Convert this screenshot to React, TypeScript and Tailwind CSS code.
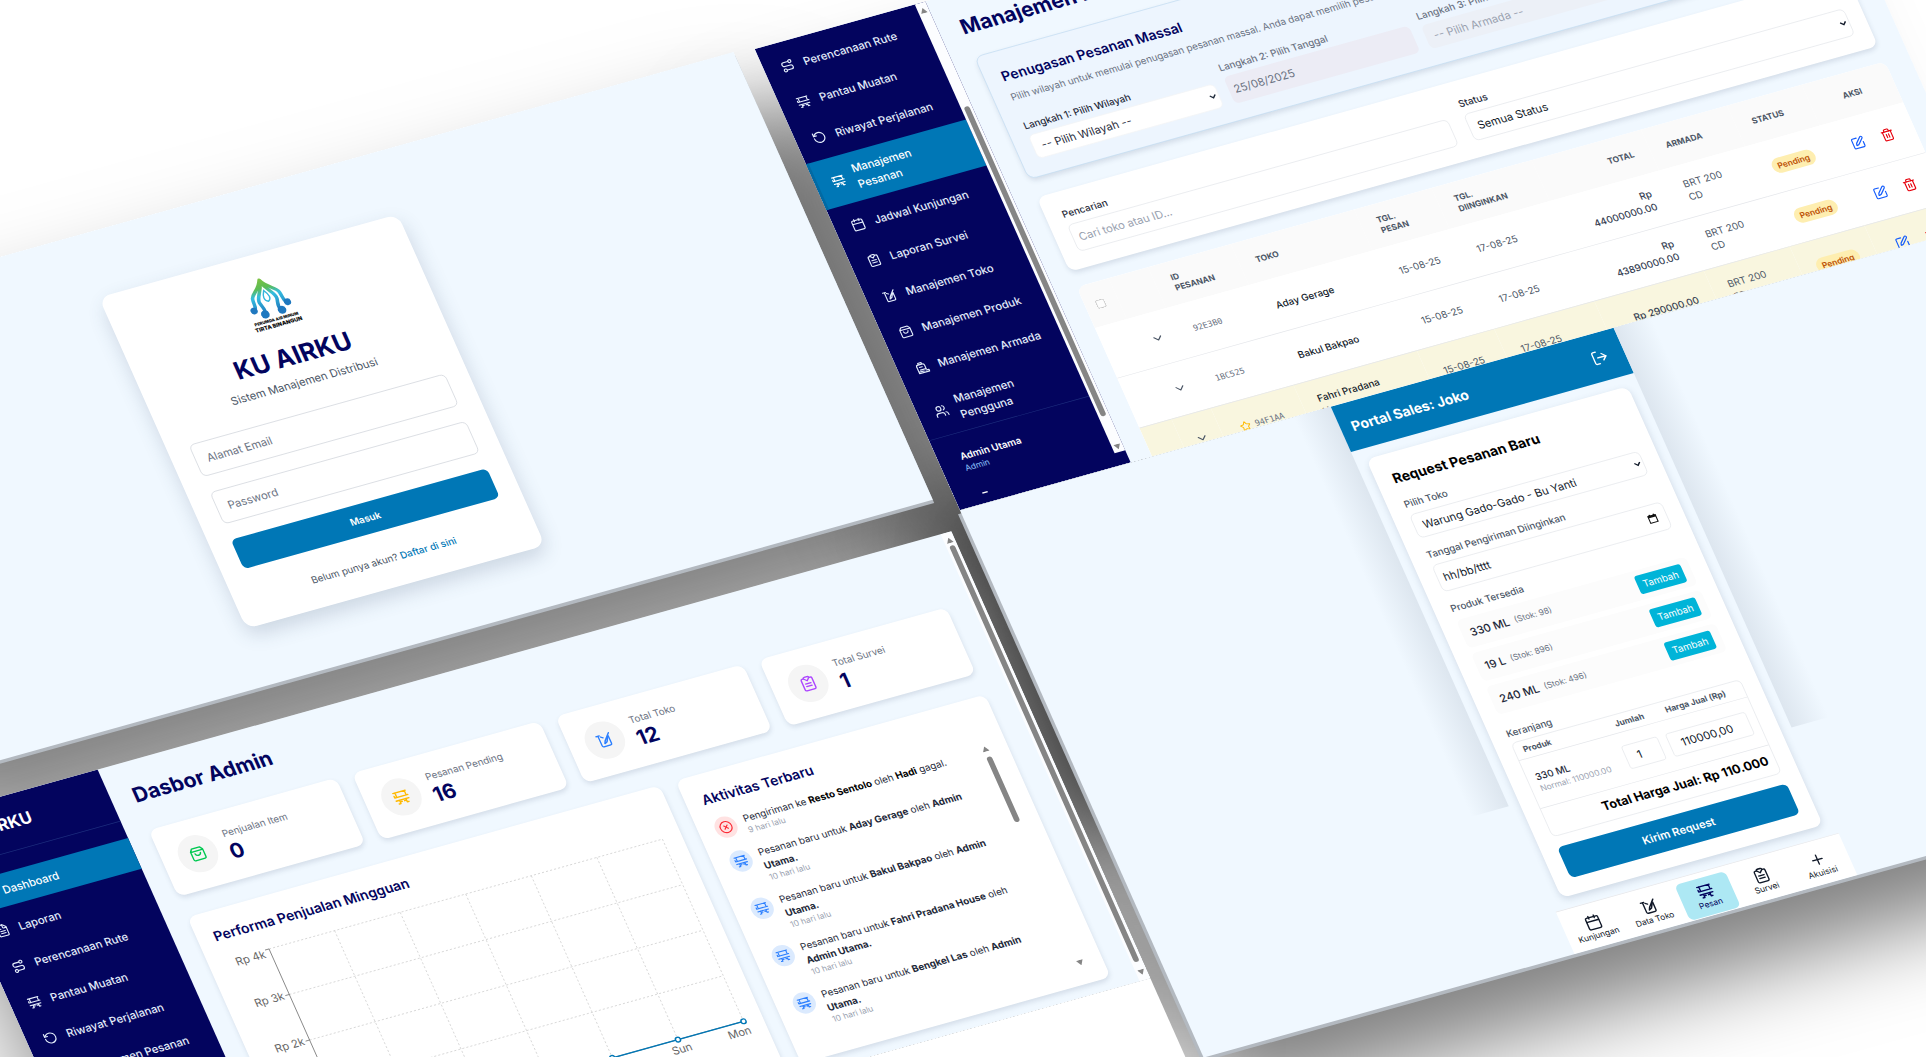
import React from "react";
import {
  Calendar,
  ChevronDown,
  CircleX,
  ClipboardList,
  FileText,
  LayoutDashboard,
  LogOut,
  Plus,
  RotateCcw,
  ShoppingBag,
  SquarePen,
  Star,
  Trash2,
  Users,
} from "lucide-react";

type IconProps = { className?: string };
type IconType = React.ComponentType<IconProps>;

const stroke = {
  viewBox: "0 0 24 24",
  fill: "none",
  stroke: "currentColor",
  strokeWidth: 2,
  strokeLinecap: "round" as const,
  strokeLinejoin: "round" as const,
};

function RouteIcon({ className }: IconProps) {
  return (
    <svg {...stroke} className={className} aria-hidden="true">
      <circle cx="18" cy="5" r="2.6" />
      <circle cx="6" cy="19" r="2.6" />
      <path d="M15 5H7a3.5 3.5 0 0 0 0 7h10a3.5 3.5 0 0 1 0 7H9" />
    </svg>
  );
}

function TruckIcon({ className }: IconProps) {
  return (
    <svg {...stroke} className={className} aria-hidden="true">
      <path d="M2.500 4H21M5.500 4v7M19.500 4v7M2.500 8.500v2.500H22" />
      <path d="M2.500 16h19M7.500 16v5H5M17 16v5h2.500M7.500 18.500h3M14 18.500h3" />
    </svg>
  );
}

function StoreIcon({ className }: IconProps) {
  return (
    <svg {...stroke} className={className} aria-hidden="true">
      <path d="M2 4h5M5 4v15a2 2 0 0 0 2 2h10a2 2 0 0 0 2-2V7" />
      <path d="M21 3l-9 10-2 4 4-2 4-7M8 6l3 2" />
    </svg>
  );
}

function FleetIcon({ className }: IconProps) {
  return (
    <svg {...stroke} className={className} aria-hidden="true">
      <path d="M8 3h6v3H8zM4 8a2 2 0 0 1 2-2h9a3 3 0 0 1 3 3v6" />
      <path d="M4 8v13h18v-3h-5M8 10.500h5M8 15.500h10M4 18.500h9" />
    </svg>
  );
}

function ClipboardIcon({ className }: IconProps) {
  return (
    <svg {...stroke} className={className} aria-hidden="true">
      <path d="M8 4H6a2 2 0 0 0-2 2v14a2 2 0 0 0 2 2h12a2 2 0 0 0 2-2V6a2 2 0 0 0-2-2h-2" />
      <path d="M8 4a2 2 0 0 1 2-2h4a2 2 0 0 1 2 2l-4 4zM8 12h8M8 16h8" />
    </svg>
  );
}

function BoxIcon({ className }: IconProps) {
  return (
    <svg {...stroke} className={className} aria-hidden="true">
      <path d="M6 3h12l3 4v12a2 2 0 0 1-2 2H5a2 2 0 0 1-2-2V7zM3 7.500h18" />
      <path d="M8 11c1 4.500 7 4.500 8 0" />
    </svg>
  );
}

function Logo() {
  return (
    <svg viewBox="0 0 80 80" className="mx-auto h-20 w-20" role="img" aria-label="Tirta Binangun">
      <defs>
        <linearGradient id="drop" gradientUnits="userSpaceOnUse" x1="0" y1="4" x2="0" y2="60">
          <stop offset="0" stopColor="#7cc243" />
          <stop offset="0.25" stopColor="#5cbc55" />
          <stop offset="0.45" stopColor="#35bde0" />
          <stop offset="1" stopColor="#1c6fb8" />
        </linearGradient>
      </defs>
      <g fill="none" stroke="url(#drop)" strokeWidth="5" strokeLinecap="round" strokeLinejoin="round">
        <path d="M16 47c5-5 2-9 4-17C22 22 34 20 40 6c6 14 18 16 20 24 2 8-1 12 4 17" />
        <path d="M28 57c4-8 0-12-1-19-1-9 9-14 13-30 4 16 14 21 13 30-1 7-5 11-1 19" />
      </g>
      <g fill="#1f78bf">
        <circle cx="15" cy="47" r="5" />
        <circle cx="28" cy="56" r="6" />
        <circle cx="53" cy="56" r="6" />
        <circle cx="65" cy="47" r="5" />
      </g>
      <path d="M40 22c5 8 6 14 0 17-6-3-5-9 0-17z" fill="#fff" stroke="#35b6dc" strokeWidth="2" />
      <text x="40" y="69" textAnchor="middle" fontFamily="Inter" fontWeight="900" fontSize="6" fill="#111">
        PERUMDA AIR MINUM
      </text>
      <text x="40" y="78" textAnchor="middle" fontFamily="Inter" fontWeight="900" fontSize="8" fill="#111">
        TIRTA BINANGUN
      </text>
    </svg>
  );
}

/* A screen lying on the tilted board; its shadow falls beneath every neighbour. */
function Screen({
  className,
  frame,
  shadow,
  children,
}: {
  className: string;
  frame: string;
  shadow: string;
  children?: React.ReactNode;
}) {
  return (
    <div className={`relative ${className}`}>
      <div className={`absolute inset-0 -z-10 ${shadow}`} />
      <div className={`h-full overflow-hidden bg-[#f0f8ff] ${frame}`}>{children}</div>
    </div>
  );
}

function Arrow({ up = false, className = "" }: { up?: boolean; className?: string }) {
  return (
    <svg viewBox="0 0 10 8" className={`h-2 w-2.5 shrink-0 fill-[#858585] ${className}`} aria-hidden="true">
      <path d={up ? "M5 0l5 8H0z" : "M5 8L0 0h10z"} />
    </svg>
  );
}

function LoginScreen() {
  return (
    <Screen
      className="-ml-1.5 h-[700px] w-[1536px]"
      frame="shadow-[0_5px_0_#b3b9c0]"
      shadow="shadow-[0_100px_150px_rgba(0,0,0,0.5)]"
    >
      <div className="flex h-full items-center justify-center pt-2">
        <form className="w-[448px] rounded-2xl bg-white p-8 shadow-[0_12px_28px_rgba(60,80,110,0.2)]">
          <Logo />
          <h1 className="mt-6 text-center text-4xl font-bold text-[#03045e]">KU AIRKU</h1>
          <p className="mt-2 text-center text-gray-600">Sistem Manajemen Distribusi</p>
          <div className="mt-8 flex flex-col gap-6">
            <input
              type="email"
              aria-label="Alamat Email"
              placeholder="Alamat Email"
              className="h-[50px] w-full rounded-lg border border-gray-300 px-4 placeholder:text-gray-500"
            />
            <input
              type="password"
              aria-label="Password"
              placeholder="Password"
              className="h-[50px] w-full rounded-lg border border-gray-300 px-4 placeholder:text-gray-500"
            />
            <button type="button" className="h-[46px] rounded-lg bg-[#0077b6] text-sm font-semibold text-white">
              Masuk
            </button>
          </div>
          <p className="mt-8 text-center text-sm text-gray-600">
            Belum punya akun?{" "}
            <a href="#daftar" className="font-medium text-[#0077b6]">
              Daftar di sini
            </a>
          </p>
        </form>
      </div>
    </Screen>
  );
}

type NavEntry = { label: string; Icon: IconType; active?: boolean };

function NavItem({ label, Icon, active }: NavEntry) {
  return (
    <a
      href="#menu"
      className={`flex items-center gap-3.5 px-6 py-3 font-medium ${
        active ? "border-l-4 border-[#026aa3] bg-[#0077b6] pl-5 text-white" : "text-[#e3edfb]"
      }`}
    >
      <Icon className="h-5 w-5 shrink-0" />
      <span>{label}</span>
    </a>
  );
}

const dashboardNav: NavEntry[] = [
  { label: "Dashboard", Icon: LayoutDashboard, active: true },
  { label: "Laporan", Icon: FileText },
  { label: "Perencanaan Rute", Icon: RouteIcon },
  { label: "Pantau Muatan", Icon: TruckIcon },
  { label: "Riwayat Perjalanan", Icon: RotateCcw },
  { label: "Manajemen Pesanan", Icon: TruckIcon },
  { label: "Jadwal Kunjungan", Icon: Calendar },
];

const orderNav: NavEntry[] = [
  { label: "Perencanaan Rute", Icon: RouteIcon },
  { label: "Pantau Muatan", Icon: TruckIcon },
  { label: "Riwayat Perjalanan", Icon: RotateCcw },
  { label: "Manajemen Pesanan", Icon: TruckIcon, active: true },
  { label: "Jadwal Kunjungan", Icon: Calendar },
  { label: "Laporan Survei", Icon: ClipboardIcon },
  { label: "Manajemen Toko", Icon: StoreIcon },
  { label: "Manajemen Produk", Icon: BoxIcon },
  { label: "Manajemen Armada", Icon: FleetIcon },
  { label: "Manajemen Pengguna", Icon: Users },
];

const stats: { label: string; value: string; Icon: IconType; tone: string }[] = [
  { label: "Penjualan Item", value: "0", Icon: BoxIcon, tone: "text-green-500" },
  { label: "Pesanan Pending", value: "16", Icon: TruckIcon, tone: "text-amber-400" },
  { label: "Total Toko", value: "12", Icon: StoreIcon, tone: "text-blue-500" },
  { label: "Total Survei", value: "1", Icon: ClipboardIcon, tone: "text-purple-500" },
];

function SalesChart() {
  const left = 66;
  const top = 8;
  const days = ["Tue", "Wed", "Thu", "Fri", "Sat", "Sun", "Mon"];
  const xs = days.map((_, i) => left + i * 98);
  const ys = [0, 1, 2, 3, 4].map((i) => top + i * 71);
  return (
    <svg viewBox="0 0 658 330" className="w-full overflow-visible" role="img" aria-label="Grafik penjualan mingguan">
      <g stroke="#cccccc" strokeDasharray="3 3">
        {xs.slice(1).map((x) => (
          <line key={x} x1={x} x2={x} y1={ys[0]} y2={ys[4]} />
        ))}
        {ys.slice(0, 4).map((y) => (
          <line key={y} x1={left} x2={xs[6]} y1={y} y2={y} />
        ))}
      </g>
      <path d={`M${left} ${ys[0]}V${ys[4]}H${xs[6]}`} fill="none" stroke="#666" />
      {ys.map((y, i) => (
        <g key={y}>
          <line x1={left - 6} x2={left} y1={y} y2={y} stroke="#666" />
          <text x={left - 8} y={i === 0 ? y + 11 : y + 5} textAnchor="end" fontSize="16" fill="#666">
            Rp {4 - i}k
          </text>
        </g>
      ))}
      <path d={`M${xs[0]} ${ys[4]}H${xs[6]}`} stroke="#0077b6" strokeWidth="2" />
      {xs.map((x, i) => (
        <g key={x}>
          <circle cx={x} cy={ys[4]} r="3.500" fill="#fff" stroke="#0077b6" strokeWidth="2" />
          <text x={i === 6 ? x - 12 : x} y={ys[4] + 20} textAnchor="middle" fontSize="16" fill="#666">
            {days[i]}
          </text>
        </g>
      ))}
    </svg>
  );
}

type Activity = { shop: string; tail: React.ReactNode };

const activities: Activity[] = [
  { shop: "Aday Gerage", tail: <> oleh <b>Admin<br />Utama.</b></> },
  { shop: "Bakul Bakpao", tail: <> oleh <b>Admin<br />Utama.</b></> },
  { shop: "Fahri Pradana House", tail: <> oleh<br /><b>Admin Utama.</b></> },
  { shop: "Bengkel Las", tail: <> oleh <b>Admin<br />Utama.</b></> },
];

function ActivityCard() {
  return (
    <section className="col-span-2 rounded-xl bg-white p-6 shadow-[0_4px_8px_rgba(70,90,120,0.16)]">
      <h2 className="text-xl font-semibold text-[#03045e]">Aktivitas Terbaru</h2>
      <div className="mt-4 flex h-[350px] justify-between">
        <ul className="flex flex-col gap-4 text-sm leading-[21px] text-gray-800">
          <li className="flex gap-3">
            <span className="flex h-8 w-8 items-center justify-center rounded-full bg-red-100 text-red-500">
              <CircleX className="h-5 w-5" />
            </span>
            <div>
              <p>
                Pengiriman ke <b className="text-black">Resto Sentolo</b> oleh <b className="text-black">Hadi</b> gagal.
              </p>
              <p className="text-xs text-gray-400">9 hari lalu</p>
            </div>
          </li>
          {activities.map((a) => (
            <li key={a.shop} className="flex gap-3">
              <span className="flex h-8 w-8 items-center justify-center rounded-full bg-blue-100 text-blue-500">
                <TruckIcon className="h-5 w-5" />
              </span>
              <div>
                <p>
                  Pesanan baru untuk <b>{a.shop}</b>
                  {a.tail}
                </p>
                <p className="text-xs text-gray-400">10 hari lalu</p>
              </div>
            </li>
          ))}
        </ul>
        <div className="flex w-4 flex-col items-center py-1">
          <Arrow up />
          <div className="mt-2 h-[102px] w-2 rounded-full bg-[#858585]" />
          <Arrow className="mt-auto" />
        </div>
      </div>
    </section>
  );
}

function DashboardScreen() {
  return (
    <Screen
      className="mt-[51px] h-[699px] w-[1536px]"
      frame="flex"
      shadow="shadow-[0_100px_150px_rgba(0,0,0,0.5)]"
    >
      <aside className="h-full w-64 shrink-0 bg-[#03045e]">
        <div className="border-b border-[#1c2c7c] p-6 text-2xl font-bold text-white">KU AIRKU</div>
        <nav className="mt-[26px] flex flex-col gap-2">
          {dashboardNav.map((item) => (
            <NavItem key={item.label} {...item} />
          ))}
        </nav>
      </aside>
      <main className="flex-1 pt-8 pr-9 pl-8">
        <h1 className="text-3xl font-bold text-[#03045e]">Dasbor Admin</h1>
        <div className="mt-9 grid grid-cols-4 gap-6">
          {stats.map(({ label, value, Icon, tone }) => (
            <div
              key={label}
              className="flex items-center gap-4 rounded-xl bg-white p-6 shadow-[0_4px_8px_rgba(70,90,120,0.16)]"
            >
              <span className={`flex h-14 w-14 items-center justify-center rounded-full bg-neutral-100 ${tone}`}>
                <Icon className="h-6 w-6" />
              </span>
              <div>
                <p className="text-sm text-gray-500">{label}</p>
                <p className="text-3xl font-bold text-[#03045e]">{value}</p>
              </div>
            </div>
          ))}
        </div>
        <div className="mt-8 grid grid-cols-5 gap-6">
          <section className="col-span-3 rounded-xl bg-white p-6 shadow-[0_4px_8px_rgba(70,90,120,0.16)]">
            <h2 className="mb-4 text-xl font-semibold text-[#03045e]">Performa Penjualan Mingguan</h2>
            <SalesChart />
          </section>
          <ActivityCard />
        </div>
      </main>
      <div className="flex w-4 flex-col items-center bg-[#fcfdff] py-2">
        <Arrow up />
        <div className="mt-1 mb-3 w-2 flex-1 rounded-full bg-[#858585]" />
        <Arrow />
      </div>
    </Screen>
  );
}

type Order = {
  id: string;
  shop: string;
  total: React.ReactNode;
  starred?: boolean;
};

const orders: Order[] = [
  { id: "92E3B0", shop: "Aday Gerage", total: <>Rp<br />44000000.00</> },
  { id: "1BC525", shop: "Bakul Bakpao", total: <>Rp<br />43890000.00</> },
  { id: "94F1AA", shop: "Fahri Pradana House", total: <>Rp 290000.00</>, starred: true },
];

function OrderTable() {
  return (
    <div className="mt-6 overflow-hidden rounded-t-xl bg-white">
      <table className="w-full table-fixed text-left text-sm">
        <colgroup>
          <col className="w-[48px]" />
          <col className="w-[59px]" />
          <col className="w-[124px]" />
          <col className="w-[185px]" />
          <col className="w-[116px]" />
          <col className="w-[150px]" />
          <col className="w-[164px]" />
          <col className="w-[129px]" />
          <col className="w-[112px]" />
          <col />
        </colgroup>
        <thead className="bg-neutral-50 text-xs font-bold text-gray-600">
          <tr className="h-16">
            <th className="pl-4">
              <input type="checkbox" aria-label="Pilih semua pesanan" className="block opacity-50" />
            </th>
            <th aria-label="Rincian" />
            <th className="px-6">
              ID
              <br />
              PESANAN
            </th>
            <th className="px-6">TOKO</th>
            <th className="px-6">TGL. PESAN</th>
            <th className="px-6">TGL. DIINGINKAN</th>
            <th className="px-6 text-right">TOTAL</th>
            <th className="px-6">ARMADA</th>
            <th className="px-6">STATUS</th>
            <th className="px-6 text-center">AKSI</th>
          </tr>
        </thead>
        <tbody className="text-gray-600">
          {orders.map((o) => (
            <tr key={o.id} className={`h-[78px] border-b border-gray-200 ${o.starred ? "bg-[#f9f6df]" : "bg-white"}`}>
              <td />
              <td>
                <button type="button" aria-label="Buka rincian" className="mx-auto block">
                  <ChevronDown className="h-5 w-5" />
                </button>
              </td>
              <td className={`font-['DejaVu_Sans_Mono'] text-xs text-gray-500 ${o.starred ? "pl-7" : "pl-6"}`}>
                <span className="flex items-center gap-1.5">
                  {o.starred && <Star className="h-4 w-4 shrink-0 text-amber-400" />}
                  {o.id}
                </span>
              </td>
              <td className="pr-12 pl-6 font-medium text-gray-900">{o.shop}</td>
              <td className="px-6">15-08-25</td>
              <td className="px-6">17-08-25</td>
              <td className="px-6 text-right font-medium text-gray-700">{o.total}</td>
              <td className="px-6">
                BRT 200
                <br />
                CD
              </td>
              <td className="px-6">
                <span className="rounded-full bg-[#feeeb0] px-2 py-1 text-xs font-semibold text-amber-700">Pending</span>
              </td>
              <td>
                <div className="flex justify-center gap-6">
                  <button type="button" aria-label="Ubah pesanan" className="text-blue-600">
                    <SquarePen className="h-5 w-5" />
                  </button>
                  <button type="button" aria-label="Hapus pesanan" className="text-red-600">
                    <Trash2 className="h-5 w-5" />
                  </button>
                </div>
              </td>
            </tr>
          ))}
        </tbody>
      </table>
    </div>
  );
}

function OrderScreen() {
  return (
    <Screen
      className="h-[721px] w-[1536px]"
      frame="flex"
      shadow="shadow-[-110px_100px_130px_rgba(0,0,0,0.42),-150px_600px_120px_-100px_rgba(0,0,0,0.6)]"
    >
      <aside className="flex w-64 shrink-0 bg-[#03045e]">
        <div className="w-60">
          <nav className="flex flex-col gap-2 pt-3">
            {orderNav.map((item) => (
              <NavItem key={item.label} {...item} />
            ))}
          </nav>
          <div className="border-t border-[#1c2c7c] px-8 pt-6">
            <p className="text-sm font-semibold text-white">Admin Utama</p>
            <p className="text-xs text-blue-300">Admin</p>
            <div className="mt-8 ml-2 h-0.5 w-2 bg-white" />
          </div>
        </div>
        <div className="flex h-[702px] w-4 flex-col items-center bg-[#fcfdff] py-1">
          <Arrow up className="mt-1" />
          <div className="mt-[146px] h-[484px] w-2 rounded-full bg-[#858585]" />
          <Arrow className="mt-auto" />
        </div>
      </aside>
      <main className="flex-1 pt-8 pr-9 pl-8">
        <h1 className="text-3xl font-bold text-[#03045e]">Manajemen Pesanan</h1>
        <section className="mt-7 rounded-xl border border-[#c5ddf2] bg-[#edf5fe] p-6 shadow-[0_4px_8px_rgba(70,90,120,0.16)]">
          <h2 className="text-xl font-semibold text-[#03045e]">Penugasan Pesanan Massal</h2>
          <p className="mt-2 text-sm text-gray-500">
            Pilih wilayah untuk memulai penugasan pesanan massal. Anda dapat memilih pesanan setelah memilih armada.
          </p>
          <div className="mt-5 grid grid-cols-4 items-end gap-4">
            <label className="flex flex-col gap-1 text-sm font-medium text-gray-800">
              Langkah 1: Pilih Wilayah
              <select className="h-[37px] rounded-lg border border-gray-100 bg-white px-2 text-base font-normal text-gray-800">
                <option>-- Pilih Wilayah --</option>
              </select>
            </label>
            <label className="flex flex-col gap-1 text-sm font-medium text-gray-500">
              Langkah 2: Pilih Tanggal
              <input
                defaultValue="25/08/2025"
                disabled
                className="h-[42px] w-full rounded-lg bg-[#ececf5] px-2 text-base font-normal text-gray-500"
              />
            </label>
            <label className="flex flex-col gap-1 text-sm font-medium text-gray-500">
              Langkah 3: Pilih Armada
              <select
                disabled
                className="h-[37px] appearance-none rounded-lg bg-[#ecf0f7] px-3 text-base font-normal text-gray-400"
              >
                <option>-- Pilih Armada --</option>
              </select>
            </label>
            <button type="button" className="h-[42px] rounded-lg bg-gray-300 text-white">
              Pilih Pesanan
            </button>
          </div>
        </section>
        <section className="mt-7 grid grid-cols-2 gap-6 rounded-xl bg-white p-6 shadow-[0_4px_8px_rgba(70,90,120,0.16)]">
          <label className="flex flex-col gap-1.5 text-sm font-medium text-gray-800">
            Pencarian
            <input
              placeholder="Cari toko atau ID..."
              className="h-[42px] w-full rounded-lg border border-gray-200 px-2 text-base font-normal placeholder:text-gray-400"
            />
          </label>
          <label className="flex flex-col gap-1.5 text-sm font-medium text-gray-800">
            Status
            <select className="h-[42px] rounded-lg border border-gray-200 px-2 text-base font-normal text-gray-900">
              <option>Semua Status</option>
            </select>
          </label>
        </section>
        <OrderTable />
      </main>
    </Screen>
  );
}

const products = [
  { name: "330 ML", stock: 98 },
  { name: "19 L", stock: 896 },
  { name: "240 ML", stock: 496 },
];

const tabs: NavEntry[] = [
  { label: "Kunjungan", Icon: Calendar },
  { label: "Data Toko", Icon: StoreIcon },
  { label: "Pesan", Icon: TruckIcon, active: true },
  { label: "Survei", Icon: ClipboardIcon },
  { label: "Akuisisi", Icon: Plus },
];

function SalesScreen() {
  return (
    <Screen
      className="h-[856px] w-[1536px]"
      frame="flex justify-center shadow-[-5px_5px_0_#b3b9c0]"
      shadow="shadow-[0_85px_130px_rgba(0,0,0,0.5)]"
    >
      <div className="h-[625px] w-14 bg-gradient-to-l from-[#dde6ef] to-[#f0f8ff]" />
      <div className="flex h-full w-[424px] flex-col">
        <header className="flex h-[71px] shrink-0 items-center justify-between bg-[#0077b6] px-4 text-white">
          <h1 className="text-xl font-bold">Portal Sales: Joko</h1>
          <button type="button" aria-label="Keluar" className="mr-2">
            <LogOut className="h-6 w-6" />
          </button>
        </header>
        <main className="flex-1 p-4">
          <form className="rounded-xl bg-white p-6 shadow-[0_4px_10px_rgba(70,90,120,0.2)]">
            <h2 className="text-xl font-bold text-black">Request Pesanan Baru</h2>
            <label className="mt-4 flex flex-col gap-1.5 text-sm font-medium text-gray-600">
              Pilih Toko
              <select className="h-[37px] rounded-lg border border-gray-200 px-2 text-base font-normal text-gray-900">
                <option>Warung Gado-Gado - Bu Yanti</option>
              </select>
            </label>
            <label className="mt-4 flex flex-col gap-1.5 text-sm font-medium text-gray-600">
              Tanggal Pengiriman Diinginkan
              <span className="flex h-[42px] items-center rounded-lg border border-gray-200 px-2">
                <input defaultValue="hh/bb/tttt" className="min-w-0 flex-1 text-base font-normal text-gray-900" />
                <svg viewBox="0 0 16 16" className="mr-1 h-4 w-4" aria-hidden="true">
                  <path d="M2.500 3.500h11v10h-11z" fill="none" stroke="#111" strokeWidth="1.500" />
                  <path d="M2 2.500h12v3.500H2zM4 1h2v2H4zM10 1h2v2h-2z" fill="#111" />
                </svg>
              </span>
            </label>
            <p className="mt-4 text-sm font-medium text-gray-600">Produk Tersedia</p>
            <ul className="mt-2 flex flex-col gap-2">
              {products.map((p) => (
                <li key={p.name} className="flex h-11 items-center gap-2 rounded-lg bg-[#fcfcfc] px-3">
                  <span className="font-medium text-gray-800">{p.name}</span>
                  <span className="text-xs text-gray-500">(Stok: {p.stock})</span>
                  <button type="button" className="ml-auto h-7 rounded bg-[#00b4d8] px-2 text-sm text-white">
                    Tambah
                  </button>
                </li>
              ))}
            </ul>
            <p className="mt-5 text-sm font-medium text-gray-600">Keranjang</p>
            <div className="mt-1 rounded-lg border border-gray-200">
              <table className="w-full table-fixed text-sm">
                <colgroup>
                  <col className="w-[136px]" />
                  <col className="w-[70px]" />
                  <col />
                </colgroup>
                <thead className="text-xs font-semibold text-gray-600">
                  <tr className="h-[26px] border-b border-gray-200">
                    <th className="pl-3 text-left">Produk</th>
                    <th>Jumlah</th>
                    <th className="pr-2">Harga Jual (Rp)</th>
                  </tr>
                </thead>
                <tbody>
                  <tr className="h-[75px] border-b border-gray-200">
                    <td className="pl-3 font-medium text-gray-800">
                      330 ML
                      <p className="text-xs font-normal text-gray-400">Normal: 110000.00</p>
                    </td>
                    <td className="px-2">
                      <input
                        aria-label="Jumlah"
                        defaultValue="1"
                        className="h-9 w-full rounded border border-gray-200 px-4 text-base text-gray-900"
                      />
                    </td>
                    <td className="pr-3 pl-1">
                      <input
                        aria-label="Harga Jual"
                        defaultValue="110000,00"
                        className="h-9 w-full rounded border border-gray-200 px-4 text-base text-gray-900"
                      />
                    </td>
                  </tr>
                </tbody>
              </table>
              <p className="flex h-[43px] items-center justify-end px-2.5 text-lg font-bold text-black">
                Total Harga Jual: Rp 110.000
              </p>
            </div>
            <button type="button" className="mt-4 h-12 w-full rounded-lg bg-[#0077b6] font-semibold text-white">
              Kirim Request
            </button>
          </form>
        </main>
        <nav className="flex h-[66px] shrink-0 gap-2 border-t border-gray-200 bg-white px-1.5 pt-2">
          {tabs.map(({ label, Icon, active }) => (
            <a
              key={label}
              href="#tab"
              className={`flex h-14 flex-1 flex-col items-center justify-center rounded-lg text-xs whitespace-nowrap ${
                active ? "bg-[#ade8f4] text-[#03045e]" : "text-gray-900"
              }`}
            >
              <Icon className="h-6 w-6" />
              {label}
            </a>
          ))}
        </nav>
      </div>
      <div className="h-[625px] w-14 bg-gradient-to-r from-[#dde6ef] to-[#f0f8ff]" />
    </Screen>
  );
}

export default function App() {
  return (
    <div className="relative h-screen w-full overflow-hidden bg-white font-[Inter,sans-serif]">
      <div className="absolute top-[337px] left-[-287px] flex w-max origin-top-left gap-6 [transform:matrix(0.667,-0.1862,0.2847,0.6395,0,0)]">
        <div className="flex flex-col">
          <LoginScreen />
          <DashboardScreen />
          <div className="h-[600px] w-[1536px] bg-white" />
        </div>
        <div className="flex flex-col pt-1">
          <OrderScreen />
          <SalesScreen />
        </div>
      </div>
    </div>
  );
}
